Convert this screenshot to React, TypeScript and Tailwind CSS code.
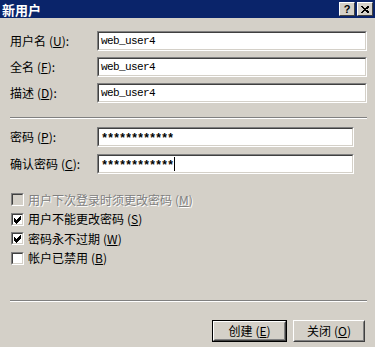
import React from "react";

const font = "font-['SimSun','Noto_Sans_CJK_SC',sans-serif]";

function Mn({ k }: { k: string }) {
  return (
    <span className="ml-[3px]">
      (<span className="underline">{k}</span>)
    </span>
  );
}

function Sunken({ children, className = "" }: { children?: React.ReactNode; className?: string }) {
  return (
    <div className={`border border-t-[#808080] border-l-[#808080] border-b-white border-r-white ${className}`}>
      <div className="h-full border border-t-[#404040] border-l-[#404040] border-b-[#d4d0c8] border-r-[#d4d0c8] bg-white">
        {children}
      </div>
    </div>
  );
}

function Field({ label, k, value, width, caret, secret }: { label: string; k: string; value: string; width: string; caret?: boolean; secret?: boolean }) {
  return (
    <div className="flex items-center h-[20px]">
      <div className="w-[87px] text-[12px] text-black">
        {label}
        <Mn k={k} />:
      </div>
      <Sunken className={`h-[20px] ${width}`}>
        <div
          className={`flex items-center h-full pl-[2px] font-['Liberation_Mono',monospace] leading-none text-black ${
            secret ? "text-[12px] font-bold tracking-[-1.2px] pt-[3px]" : "text-[11px] tracking-[-0.6px]"
          }`}
        >
          {value}
          {caret && <span className="ml-[1px] -mt-[3px] inline-block w-[1px] h-[14px] bg-black" />}
        </div>
      </Sunken>
    </div>
  );
}

function Check({ label, k, checked, disabled }: { label: string; k: string; checked?: boolean; disabled?: boolean }) {
  return (
    <div className="flex items-center h-[19.5px] text-[12px]">
      <Sunken className="w-[13px] h-[13px]">
        <div className={`w-full h-full ${disabled ? "bg-[#d4d0c8]" : "bg-white"}`}>
          {checked && (
            <svg width="9" height="9" viewBox="0 0 9 9" className="block">
              <path d="M1 3.5 L3.5 6 L8 1.5 M1 4.5 L3.5 7 L8 2.5 M1 5.5 L3.5 8 L8 3.5" stroke="#000" strokeWidth="1" fill="none" shapeRendering="crispEdges" />
            </svg>
          )}
        </div>
      </Sunken>
      <span className={`ml-[4px] ${disabled ? "text-[#808080] [text-shadow:1px_1px_0_#fff]" : "text-black"}`}>
        {label}
        <Mn k={k} />
      </span>
    </div>
  );
}

function Separator() {
  return (
    <div className="w-full">
      <div className="h-px bg-[#808080]" />
      <div className="h-px bg-white" />
    </div>
  );
}

function Button({ children, primary }: { children: React.ReactNode; primary?: boolean }) {
  return (
    <div className={`${primary ? "border border-black" : ""} h-[22px]`}>
      <div className="h-full border border-t-white border-l-white border-b-[#404040] border-r-[#404040]">
        <div className="h-full flex items-center justify-center border border-t-[#d4d0c8] border-l-[#d4d0c8] border-b-[#808080] border-r-[#808080] text-[12px] text-black">
          {children}
        </div>
      </div>
    </div>
  );
}

function TitleButton({ children }: { children: React.ReactNode }) {
  return (
    <div className="w-[16px] h-[14px] bg-[#d4d0c8] border border-t-white border-l-white border-b-[#404040] border-r-[#404040] flex items-center justify-center">
      {children}
    </div>
  );
}

export default function App() {
  return (
    <div className={`w-[375px] h-[347px] bg-[#d4d0c8] overflow-hidden ${font}`}>
      <div className="h-[18px] bg-[#0a246a] flex items-center justify-between pl-[2px] pr-[2px]">
        <span className="text-white font-bold text-[13px] leading-none">新用户</span>
        <div className="flex gap-[2px]">
          <TitleButton>
            <span className="font-['Liberation_Sans',sans-serif] font-bold text-[11px] leading-none">?</span>
          </TitleButton>
          <TitleButton>
            <svg width="8" height="7" viewBox="0 0 8 7">
              <path d="M0.5 0.5 L7 6.5 M1.5 0.5 L8 6.5 M7 0.5 L0.5 6.5 M8 0.5 L1.5 6.5" stroke="#000" strokeWidth="1" shapeRendering="crispEdges" />
            </svg>
          </TitleButton>
        </div>
      </div>

      <div className="px-[10px] pr-[8px]">
        <div className="mt-[13px] flex flex-col gap-[6px]">
          <Field label="用户名" k="U" value="web_user4" width="w-[270px]" />
          <Field label="全名" k="F" value="web_user4" width="w-[270px]" />
          <Field label="描述" k="D" value="web_user4" width="w-[270px]" />
        </div>

        <div className="mt-[14px]">
          <Separator />
        </div>

        <div className="mt-[8px] flex flex-col gap-[7px]">
          <Field label="密码" k="P" value="************" width="w-[257px]" secret />
          <Field label="确认密码" k="C" value="************" width="w-[257px]" secret caret />
        </div>

        <div className="mt-[16px] flex flex-col pl-[1px]">
          <Check label="用户下次登录时须更改密码" k="M" disabled />
          <Check label="用户不能更改密码" k="S" checked />
          <Check label="密码永不过期" k="W" checked />
          <Check label="帐户已禁用" k="B" />
        </div>

        <div className="mt-[32px]">
          <Separator />
        </div>

        <div className="mt-[18px] flex justify-end gap-[6px] pr-[2px]">
          <div className="w-[75px]">
            <Button primary>
              创建<Mn k="E" />
            </Button>
          </div>
          <div className="w-[72px]">
            <Button>
              关闭<Mn k="O" />
            </Button>
          </div>
        </div>
      </div>
    </div>
  );
}
